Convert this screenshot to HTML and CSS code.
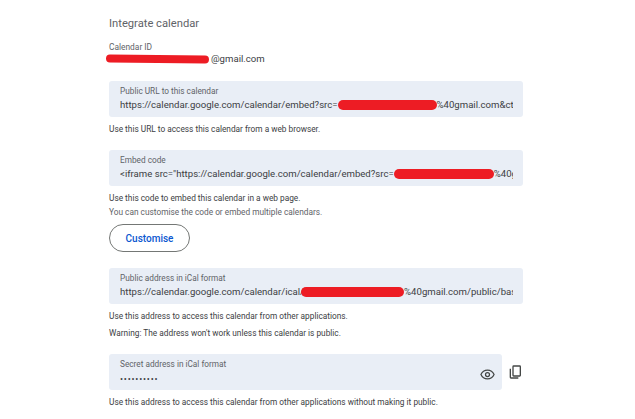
FILE: index.html
```html
<!DOCTYPE html>
<html lang="en">
  <head>
    <meta charset="UTF-8" />
    <meta name="viewport" content="width=device-width, initial-scale=1.0" />
    <title>Integrate calendar</title>
    <link rel="stylesheet" href="styles.css">
  </head>
  <body>
    <div class="page">
      <h1 class="title">Integrate calendar</h1>

      <div class="calendar-id">
        <p class="id-label">Calendar ID</p>
        <p class="id-value"><span class="redact redact-id"></span>@gmail.com</p>
      </div>

      <div class="field field-url">
        <p class="field-label">Public URL to this calendar</p>
        <p class="field-value">https://calendar.google.com/calendar/embed?src=<span class="redact redact-url"></span>%40gmail.com&amp;ctz=Europe</p>
      </div>
      <p class="hint hint-url">Use this URL to access this calendar from a web browser.</p>

      <div class="field field-embed">
        <p class="field-label">Embed code</p>
        <p class="field-value">&lt;iframe src="https://calendar.google.com/calendar/embed?src=<span class="redact redact-embed"></span>%40gmail.com</p>
      </div>
      <p class="hint hint-embed">Use this code to embed this calendar in a web page.</p>
      <p class="hint hint-second">You can customise the code or embed multiple calendars.</p>
      <button class="btn">Customise</button>

      <div class="field field-ical">
        <p class="field-label">Public address in iCal format</p>
        <p class="field-value">https://calendar.google.com/calendar/ical/<span class="redact redact-ical"></span>%40gmail.com/public/basic.ics</p>
      </div>
      <p class="hint hint-ical">Use this address to access this calendar from other applications.</p>
      <p class="hint hint-warning">Warning: The address won't work unless this calendar is public.</p>

      <div class="secret-row">
        <div class="field field-secret">
          <div class="secret-text">
            <p class="field-label">Secret address in iCal format</p>
            <p class="field-value dots">••••••••••</p>
          </div>
          <svg class="icon" viewBox="0 0 24 24" width="15" height="15" fill="none" stroke="#444746" stroke-width="2">
            <path d="M1.5 12C3.5 7.5 7.4 5 12 5s8.500 2.500 10.500 7c-2 4.500-5.900 7-10.500 7S3.500 16.500 1.500 12z" />
            <circle cx="12" cy="12" r="3.200" />
          </svg>
        </div>
        <svg class="icon copy" viewBox="0 0 24 24" width="16" height="16" fill="none" stroke="#444746" stroke-width="2">
          <rect x="9" y="3" width="11" height="15" rx="1" />
          <path d="M5 7v13a1 1 0 0 0 1 1h11" />
        </svg>
      </div>
      <p class="hint hint-secret">Use this address to access this calendar from other applications without making it public.</p>
    </div>
  </body>
</html>
```

FILE: styles.css
```css
html, body {
    margin: 0;
    padding: 0;
    height: 419px;
    overflow: hidden;
    background-color: #fff;
}
body {
    font-family: Roboto, Arial, sans-serif;
    color: #3c4043;
}
p, h1 {
    margin: 0;
}
.page {
    width: 414px;
    margin-left: 109px;
    padding-top: 16px;
}
.title {
    font-size: 11.2px;
    font-weight: 400;
    line-height: 16px;
    color: #5f6368;
}
.calendar-id {
    margin-top: 9px;
}
.id-label {
    font-size: 8.4px;
    line-height: 12px;
    color: #5f6368;
}
.id-value {
    font-size: 9.6px;
    line-height: 12px;
}
.redact {
    display: inline-block;
    height: 10px;
    border-radius: 5px;
    background-color: #ed1c24;
    vertical-align: -2px;
}
.redact-id {
    width: 103px;
    height: 8px;
    margin: 0 2px 0 -3px;
    vertical-align: -1px;
    transform: rotate(0.5deg);
}
.redact-url {
    width: 99px;
}
.redact-embed {
    width: 100px;
}
.redact-ical {
    width: 103px;
    margin-left: -3px;
}
.field {
    background-color: #e9eef6;
    border-radius: 3px;
    padding: 5px 10px 0 11px;
    height: 36px;
    box-sizing: border-box;
    overflow: hidden;
}
.field-url {
    margin-top: 16px;
}
.field-embed {
    margin-top: 15px;
}
.field-ical {
    margin-top: 16px;
}
.field-label {
    font-size: 8.25px;
    line-height: 11px;
    color: #5f6368;
}
.field-value {
    font-size: 9.6px;
    line-height: 14px;
    margin-top: 1px;
    white-space: nowrap;
    overflow: hidden;
    color: #3c4043;
}
.dots {
    margin-top: 2px;
    letter-spacing: 0.8px;
    font-size: 9px;
}
.hint {
    font-size: 8.3px;
    line-height: 12px;
    color: #3c4043;
}
.hint-url,
.hint-embed,
.hint-ical,
.hint-secret {
    margin-top: 6px;
}
.hint-second {
    margin-top: 2px;
    color: #5f6368;
}
.hint-warning {
    margin-top: 5px;
}
.btn {
    display: block;
    width: 81px;
    height: 28px;
    margin-top: 6px;
    padding: 0;
    border: 1px solid #747775;
    border-radius: 14px;
    background-color: #fff;
    font-family: Roboto, Arial, sans-serif;
    font-size: 10px;
    font-weight: 500;
    color: #0b57d0;
}
.secret-row {
    display: flex;
    align-items: center;
    margin-top: 15px;
    height: 36px;
}
.field-secret {
    flex: 1;
    display: flex;
    align-items: center;
    padding-right: 7px;
}
.secret-text {
    flex: 1;
    align-self: flex-start;
}
.copy {
    margin: 0 0 0 5px;
}
```
